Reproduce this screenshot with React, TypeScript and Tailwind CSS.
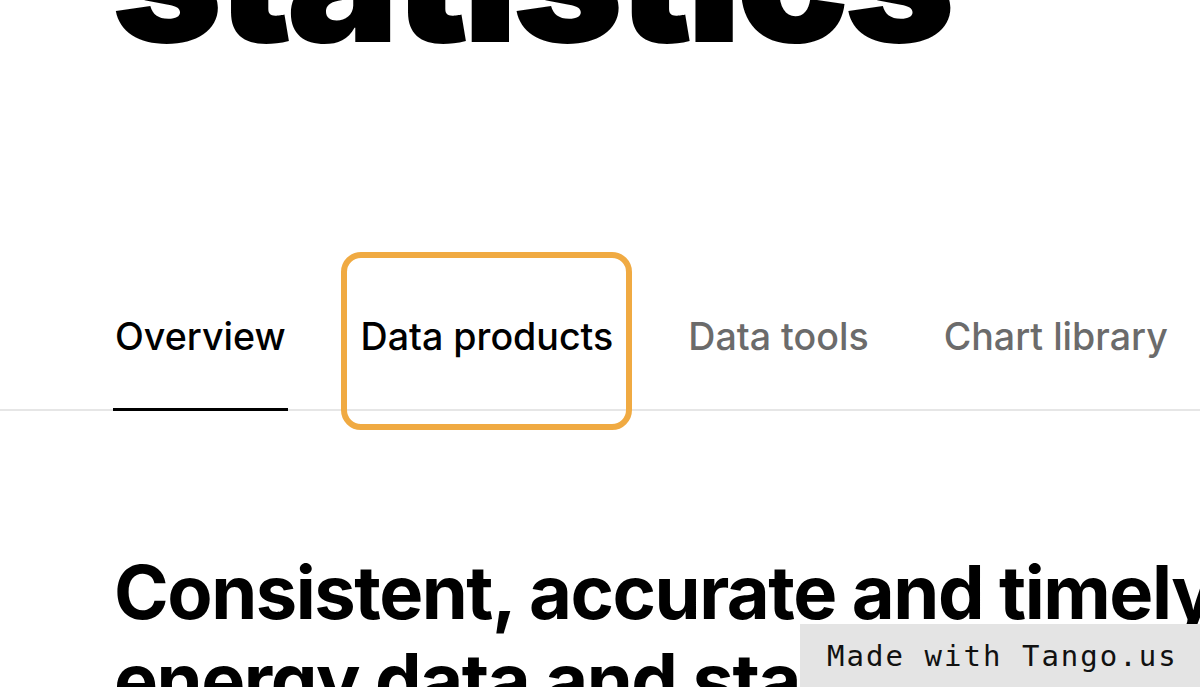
import React from "react";

export default function App() {
  const tabs = [
    { label: "Overview", active: true },
    { label: "Data products", highlight: true },
    { label: "Data tools" },
    { label: "Chart library" },
  ];
  return (
    <div className="relative w-[1200px] h-[687px] overflow-hidden bg-white font-['Inter',sans-serif] text-black">
      <h1 className="mt-[-122px] pl-[111px] text-[190px] leading-[190px] font-black tracking-[-0.035em] whitespace-nowrap">
        statistics
      </h1>
      <div className="mt-[246px] border-b-2 border-[#e6e6e6]">
        <nav className="flex gap-[75px] pl-[115px]">
          {tabs.map((t) => (
            <div
              key={t.label}
              className={
                "relative pb-[49px] text-[37.6px] leading-[45.6px] font-medium whitespace-nowrap " +
                (t.active ? "text-black" : t.highlight ? "text-black" : "text-[#6b6b6b]")
              }
            >
              {t.label}
              {t.active && (
                <div className="absolute left-[-2px] right-[-2px] bottom-[-2px] h-[3px] bg-black" />
              )}
              {t.highlight && (
                <div className="absolute left-[-20px] right-[-19px] top-[-62px] bottom-[-21px] rounded-[20px] border-[6px] border-[#f0aa42]" />
              )}
            </div>
          ))}
        </nav>
      </div>
      <h2 className="mt-[137px] pl-[114px] text-[74px] leading-[88px] font-bold tracking-[-0.02em] whitespace-nowrap">
        Consistent, accurate and timely
        <br />
        energy data and statistics
      </h2>
      <div className="absolute right-0 bottom-0 w-[400px] h-[63px] bg-[#e4e4e4] flex items-center pl-[27px]">
        <span className="font-['DejaVu_Sans_Mono',monospace] text-[29px] leading-none text-[#111] tracking-[0.07em] pt-[2px]">
          Made with Tango.us
        </span>
      </div>
    </div>
  );
}
